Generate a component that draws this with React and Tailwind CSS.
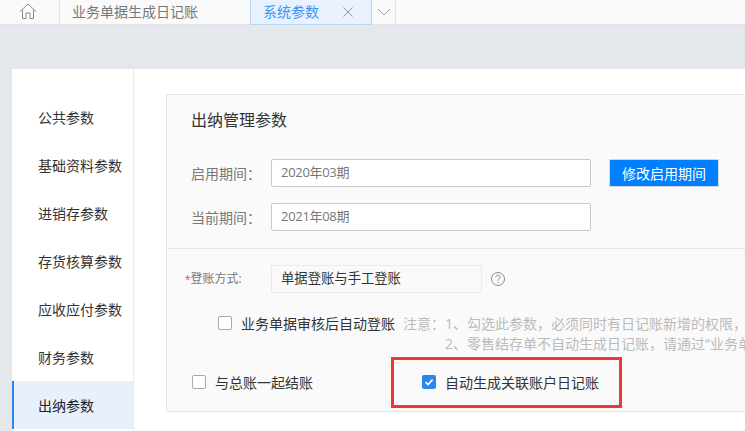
import React from "react";

function Check({ checked, className = "" }) {
  if (checked) {
    return (
      <span className={"flex h-[14px] w-[14px] shrink-0 items-center justify-center rounded-[2px] bg-[#2b87f0] " + className}>
        <svg width="10" height="10" viewBox="0 0 10 10" fill="none">
          <path d="M1.5 5.2 L4 7.6 L8.6 2.6" stroke="#fff" strokeWidth="1.7" />
        </svg>
      </span>
    );
  }
  return <span className={"block h-[14px] w-[14px] shrink-0 rounded-[2px] border border-[#a9a9a9] bg-white " + className} />;
}

const nav = ["公共参数", "基础资料参数", "进销存参数", "存货核算参数", "应收应付参数", "财务参数", "出纳参数"];

export default function App() {
  return (
    <div className="relative flex h-[431px] w-[745px] flex-col overflow-hidden bg-[#e4e7ec] font-['Open_Sans','Noto_Sans_CJK_SC',sans-serif] text-[14px] text-[#333]">
      <div className="flex h-[25px] shrink-0 border-b border-[#e0e2e6] bg-[#fafafa]">
        <div className="flex w-[60px] items-center justify-center border-r border-[#e4e4e4] pb-[2px] pr-[3px] text-[#8a8a8a]">
          <svg width="18" height="18" viewBox="0 0 18 18" fill="none" stroke="currentColor" strokeWidth="1">
            <path d="M1 9.5 L9 2 L17 9.5 M3.5 7.5 V16.5 H7 V11 H11 V16.5 H14.5 V7.5" />
          </svg>
        </div>
        <div className="flex w-[190px] items-center pb-[2px] pl-[12px] text-[#777]">业务单据生成日记账</div>
        <div className="flex h-[25px] w-[122px] items-center border-x border-b border-[#b5d6f7] bg-[#e8f1fd] pb-[2px] pl-[12px] text-[#3d94f5]">
          系统参数
          <svg className="ml-[24px] mt-[2px]" width="10" height="10" viewBox="0 0 10 10" fill="none" stroke="#9a9a9a" strokeWidth="1">
            <path d="M0.5 0.5 L9.5 9.5 M9.5 0.5 L0.5 9.5" />
          </svg>
        </div>
        <div className="flex w-[24px] items-center justify-center border-r border-[#e4e4e4]">
          <svg width="14" height="8" viewBox="0 0 14 8" fill="none" stroke="#a5a5a5" strokeWidth="1">
            <path d="M1 1 L7 7 L13 1" />
          </svg>
        </div>
      </div>

      <div className="ml-[12px] mt-[44px] flex min-h-0 flex-1 bg-white">
        <aside className="w-[122px] shrink-0 border-r border-[#ebebeb] pt-[24px]">
          {nav.map((n, i) => (
            <div
              key={n}
              className={
                i === 6
                  ? "flex h-[48px] items-center border-l-2 border-[#2b87f0] bg-[#e8f0fb] pl-[24px] text-[#222]"
                  : "flex h-[48px] items-center pl-[26px] text-[#333]"
              }
            >
              {n}
            </div>
          ))}
        </aside>

        <main className="min-w-0 flex-1 pl-[32px] pt-[25px]">
          <section className="h-[318px] w-[640px] border border-[#e6e6e6] bg-[#fafafa]">
            <h2 className="pl-[24px] pt-[13px] text-[16px] font-normal leading-[24px] text-[#333]">出纳管理参数</h2>

            <div className="mt-[27px] flex flex-col gap-[16px] pb-[17px]">
              <div className="flex items-center">
                <span className="w-[104px] pl-[24px] text-[#777]">启用期间：</span>
                <div className="flex h-[28px] w-[320px] items-center rounded-[2px] border border-[#c9c9c9] bg-white pl-[9px] text-[13px] tracking-[-0.3px] text-[#777]">2020年03期</div>
                <button className="ml-[18px] h-[28px] w-[110px] border border-[#cfd8e3] bg-[#0080ff] text-white">修改启用期间</button>
              </div>
              <div className="flex items-center">
                <span className="w-[104px] pl-[24px] text-[#777]">当前期间：</span>
                <div className="flex h-[28px] w-[320px] items-center rounded-[2px] border border-[#c9c9c9] bg-white pl-[9px] text-[13px] tracking-[-0.3px] text-[#777]">2021年08期</div>
              </div>
            </div>

            <div className="border-t border-[#e6e6e6] pt-[16px]">
              <div className="flex items-center">
                <span className="w-[104px] pl-[18px] text-[12px] text-[#777]"><span className="text-[10px] text-[#e44]">*</span>登账方式:</span>
                <div className="flex h-[28px] w-[211px] items-center border border-[#ebebeb] pl-[9px] text-[13.33px] text-[#333]">单据登账与手工登账</div>
                <svg className="ml-[8px]" width="16" height="16" viewBox="0 0 16 16" fill="none" stroke="#8a8a8a">
                  <circle cx="8" cy="8" r="6.5" />
                  <path d="M5.8 6.2 C5.8 3.6 10.2 3.6 10.2 6.2 C10.2 7.8 8 7.8 8 9.8" />
                  <path d="M8 10.8 V12.2" />
                </svg>
              </div>

              <div className="mt-[21px] flex items-start pl-[51px]">
                <Check className="mt-[2px]" />
                <span className="ml-[9px] w-[162px] shrink-0 leading-[20px] text-[#333]">业务单据审核后自动登账</span>
                <span className="w-[42px] shrink-0 whitespace-nowrap leading-[20px] text-[#bbb]">注意：</span>
                <div className="whitespace-nowrap leading-[20px] text-[#bbb]">
                  <div>1、勾选此参数，必须同时有日记账新增的权限，</div>
                  <div>2、零售结存单不自动生成日记账，请通过“业务单据生成日记账”</div>
                </div>
              </div>

              <div className="mt-[18px] flex h-[20px] items-center pl-[25px]">
                <Check />
                <span className="ml-[9px] w-[207px] text-[#333]">与总账一起结账</span>
                <Check checked />
                <span className="ml-[9px] text-[#333]">自动生成关联账户日记账</span>
              </div>
            </div>
          </section>
        </main>
      </div>

      <div className="absolute left-[391px] top-[357px] h-[51px] w-[231px] border-[3px] border-[#f03535]" />
    </div>
  );
}
